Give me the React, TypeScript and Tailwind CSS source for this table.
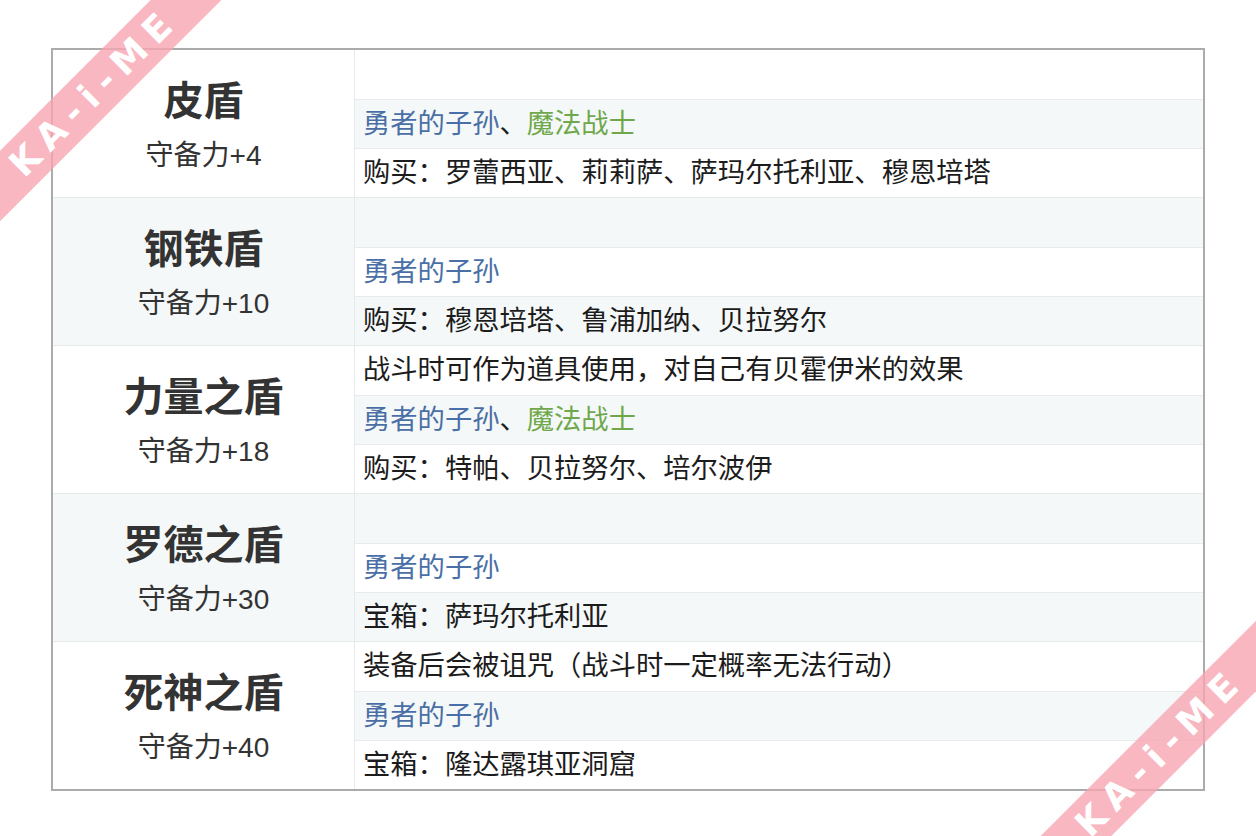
import React from 'react';

type Part = { text: string; tone?: 'blue' | 'green' | 'plain' };

interface Shield {
  name: string;
  defense: string;
  rows: Part[][];
}

const shields: Shield[] = [
  {
    name: '皮盾',
    defense: '守备力+4',
    rows: [
      [],
      [{ text: '勇者的子孙', tone: 'blue' }, { text: '、' }, { text: '魔法战士', tone: 'green' }],
      [{ text: '购买：罗蕾西亚、莉莉萨、萨玛尔托利亚、穆恩培塔' }],
    ],
  },
  {
    name: '钢铁盾',
    defense: '守备力+10',
    rows: [
      [],
      [{ text: '勇者的子孙', tone: 'blue' }],
      [{ text: '购买：穆恩培塔、鲁浦加纳、贝拉努尔' }],
    ],
  },
  {
    name: '力量之盾',
    defense: '守备力+18',
    rows: [
      [{ text: '战斗时可作为道具使用，对自己有贝霍伊米的效果' }],
      [{ text: '勇者的子孙', tone: 'blue' }, { text: '、' }, { text: '魔法战士', tone: 'green' }],
      [{ text: '购买：特帕、贝拉努尔、培尔波伊' }],
    ],
  },
  {
    name: '罗德之盾',
    defense: '守备力+30',
    rows: [
      [],
      [{ text: '勇者的子孙', tone: 'blue' }],
      [{ text: '宝箱：萨玛尔托利亚' }],
    ],
  },
  {
    name: '死神之盾',
    defense: '守备力+40',
    rows: [
      [{ text: '装备后会被诅咒（战斗时一定概率无法行动）' }],
      [{ text: '勇者的子孙', tone: 'blue' }],
      [{ text: '宝箱：隆达露琪亚洞窟' }],
    ],
  },
];

const toneClass = (tone?: Part['tone']) =>
  tone === 'blue' ? 'text-[#4a6fa6]' : tone === 'green' ? 'text-[#6fa84a]' : 'text-[#1c1c1c]';

// pink corner watermark
const Ribbon = ({ cx, cy }: { cx: number; cy: number }) => (
  <div
    className="pointer-events-none absolute flex h-[50px] w-[440px] -rotate-45 items-center justify-center bg-[#f8a6b1]/80"
    style={{ left: cx - 220, top: cy - 25 }}
  >
    <span className="font-['DejaVu_Sans',sans-serif] text-[36px] leading-none font-black tracking-[9px] text-white">
      KA-i-ME
    </span>
  </div>
);

export default function App() {
  return (
    <div className="relative h-[836px] w-[1256px] overflow-hidden bg-white font-['Liberation_Sans','Noto_Sans_CJK_SC',sans-serif]">
      <div className="pl-[51px] pt-[48px]">
        <div className="w-[1154px] border-2 border-[#ababab]">
          {shields.map((s, i) => (
            <div key={s.name} className={`flex ${i > 0 ? 'border-t border-[#e6eaea]' : ''}`}>
              <div
                className={`flex w-[302px] shrink-0 flex-col items-center justify-center border-r border-[#e6eaea] ${
                  i % 2 === 1 ? 'bg-[#f5f8f8]' : 'bg-white'
                }`}
              >
                <div className="font-['Noto_Sans_CJK_SC',sans-serif] text-[40px] font-bold leading-[48px] text-[#333333]">
                  {s.name}
                </div>
                <div className="mt-[16px] text-[28px] leading-[36px] text-[#333333]">{s.defense}</div>
              </div>
              <div className="flex-1">
                {s.rows.map((row, j) => {
                  const light = (i * 3 + j) % 2 === 1;
                  return (
                    <div
                      key={j}
                      className={`flex h-[49px] items-center px-[8px] text-[27.3px] ${
                        j > 0 ? 'border-t border-[#e8ecec]' : ''
                      } ${light ? 'bg-[#f5f8f8]' : 'bg-white'}`}
                    >
                      {row.map((p, k) => (
                        <span key={k} className={`whitespace-nowrap ${toneClass(p.tone)}`}>
                          {p.text}
                        </span>
                      ))}
                    </div>
                  );
                })}
              </div>
            </div>
          ))}
        </div>
      </div>
      <Ribbon cx={94} cy={92} />
      <Ribbon cx={1160} cy={752} />
    </div>
  );
}
